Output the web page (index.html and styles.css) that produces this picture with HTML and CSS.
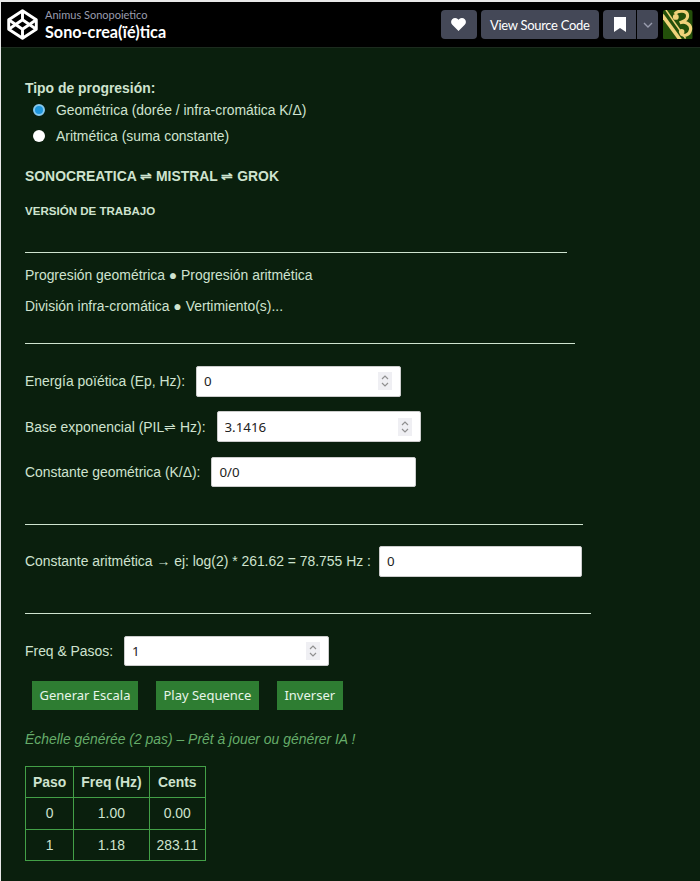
FILE: index.html
```html
<!DOCTYPE html>
<html lang="en">
<head>
    <meta charset="UTF-8">
    <meta name="viewport" content="width=device-width, initial-scale=1.0">
    <title>Sono-crea(ïé)tica</title>
    <link rel="stylesheet" href="styles.css">
</head>
<body>

<header class="pen-header">
    <svg class="pen-logo" viewBox="0 0 36 36" fill="none" stroke="#fff" stroke-width="3.4" stroke-linejoin="round">
        <path d="M18 2 L34 12.5 V23.5 L18 34 L2 23.5 V12.5 Z"/>
        <path d="M18 2 V12.5 M18 23.5 V34 M2 12.5 L18 23.5 L34 12.5 M2 23.5 L18 12.5 L34 23.5"/>
    </svg>
    <div class="pen-title">
        <div class="pen-author">Animus Sonopoietico</div>
        <div class="pen-name">Sono-crea(ïé)tica</div>
    </div>
    <div class="pen-actions">
        <button class="pen-btn pen-btn-icon">
            <svg width="15" height="13" viewBox="0 0 16 14" fill="#fff"><path d="M8 14 L1.3 7.4 C-0.4 5.6 -0.4 3 1.2 1.3 C2.9 -0.4 5.6 -0.4 7.2 1.2 L8 2 L8.8 1.2 C10.4 -0.4 13.1 -0.4 14.8 1.3 C16.4 3 16.4 5.6 14.7 7.4 Z"/></svg>
        </button>
        <button class="pen-btn pen-btn-source">View Source Code</button>
        <div class="pen-split">
            <button class="pen-btn pen-btn-save">
                <svg width="12" height="15" viewBox="0 0 12 15" fill="#fff"><path d="M0 0 H12 V15 L6 11 L0 15 Z"/></svg>
            </button>
            <button class="pen-btn pen-btn-more">
                <svg width="10" height="6" viewBox="0 0 10 6" fill="none" stroke="#9a9dae" stroke-width="1.4"><path d="M1 1 L5 5 L9 1"/></svg>
            </button>
        </div>
        <svg class="pen-avatar" viewBox="0 0 30 30">
            <rect width="30" height="30" rx="2" fill="#234f0a"/>
            <g fill="none" stroke="#f0d27a">
                <path d="M-1 5 L18 31" stroke-width="3.6"/>
                <path d="M3 0 L23 29" stroke-width="1.5"/>
                <path d="M12 4 C15 0 25 0 25 6 C25 11 19 12 17 13 C22 11 29 14 28 20 C27 26 21 27 18 24" stroke-width="3.2"/>
            </g>
            <circle cx="13" cy="7" r="3" fill="#f0d27a"/>
            <circle cx="19" cy="22" r="2.8" fill="#f0d27a"/>
        </svg>
    </div>
</header>

<main class="app">
    <div class="mode-box">
        <div class="mode-title">Tipo de progresión:</div>
        <label class="radio-row"><input type="radio" name="modo" checked> Geométrica (dorée / infra-cromática K/Δ)</label>
        <label class="radio-row"><input type="radio" name="modo"> Aritmética (suma constante)</label>
    </div>

    <h2 class="main-title">SONOCREATICA ⇌ MISTRAL ⇌ GROK</h2>
    <h5 class="sub-title">VERSIÓN DE TRABAJO</h5>

    <hr class="rule rule-1">
    <p class="line">Progresión geométrica ● Progresión aritmética</p>
    <p class="line">División infra-cromática ● Vertimiento(s)...</p>
    <hr class="rule rule-2">

    <div class="field"><label>Energía poïética (Ep, Hz):</label><input type="number" value="0"></div>
    <div class="field"><label>Base exponencial (PIL⇌ Hz):</label><input type="number" value="3.1416"></div>
    <div class="field"><label>Constante geométrica (K/Δ):</label><input type="text" value="0/0"></div>

    <hr class="rule rule-3">
    <div class="field field-tight"><label>Constante aritmética → ej: log(2) * 261.62 = 78.755 Hz :</label><input type="text" value="0"></div>
    <hr class="rule rule-4">

    <div class="field"><label>Freq &amp; Pasos:</label><input type="number" value="1"></div>

    <div class="buttons">
        <button class="action">Generar Escala</button>
        <button class="action">Play Sequence</button>
        <button class="action">Inverser</button>
    </div>

    <p class="status">Échelle générée (2 pas) – Prêt à jouer ou générer IA !</p>

    <table class="scale">
        <tr><th>Paso</th><th>Freq (Hz)</th><th>Cents</th></tr>
        <tr><td>0</td><td>1.00</td><td>0.00</td></tr>
        <tr><td>1</td><td>1.18</td><td>283.11</td></tr>
    </table>
</main>

</body>
</html>
```
FILE: styles.css
```css
* {
    box-sizing: border-box;
}

html {
    background-color: #0a1f0d;
}

body {
    margin: 0;
    border-top: 2px solid #e8e8e8;
    border-left: 1px solid #e8e8e8;
    background-color: #0a1f0d;
    color: #cfe3cf;
    font-family: "Liberation Sans", Arial, sans-serif;
    font-size: 13.92px;
    min-height: 881px;
}

.pen-header {
    display: flex;
    align-items: center;
    height: 46px;
    background-color: #000;
    border-bottom: 1px solid #1c2b1e;
    padding: 0 7.5px 0 6px;
}

.pen-logo {
    width: 31px;
    height: 31px;
    margin-right: 7px;
}

.pen-title {
    flex: 1;
    font-family: Lato, sans-serif;
}

.pen-author {
    color: #9a9dae;
    font-size: 11px;
    line-height: 14px;
}

.pen-name {
    color: #fff;
    font-size: 16.2px;
    font-weight: 700;
    line-height: 20px;
}

.pen-actions {
    display: flex;
    align-items: center;
    gap: 4px;
}

.pen-btn {
    height: 29px;
    border: none;
    border-radius: 4px;
    background-color: #444857;
    color: #fff;
    font-family: Lato, sans-serif;
    font-size: 13px;
    letter-spacing: -0.3px;
    display: flex;
    align-items: center;
    justify-content: center;
    padding: 0;
}

.pen-btn-icon {
    width: 35.5px;
}

.pen-btn-source {
    width: 118.5px;
}

.pen-split {
    display: flex;
    gap: 1px;
}

.pen-btn-save {
    width: 33px;
    border-radius: 4px 0 0 4px;
}

.pen-btn-more {
    width: 21px;
    border-radius: 0 4px 4px 0;
}

.pen-avatar {
    width: 29.5px;
    height: 29.5px;
    margin-left: 1px;
}

.app {
    padding: 32px 24px 0;
}

.mode-box {
    margin-bottom: 19px;
}

.mode-title {
    font-weight: bold;
    line-height: 17px;
}

.radio-row {
    display: flex;
    align-items: center;
    height: 26px;
    padding-left: 8px;
}

.radio-row input {
    appearance: none;
    margin: 0 11px 0 0;
    width: 12px;
    height: 12px;
    border-radius: 50%;
    background-color: #fff;
}

.radio-row input:checked {
    background-color: #1e96dc;
    border: 2px solid #86c8ee;
}

.main-title {
    font-size: 13.92px;
    margin: 0;
    line-height: 17px;
}

.sub-title {
    font-size: 11.55px;
    margin: 19px 0 0;
    line-height: 14px;
}

.rule {
    border: none;
    border-top: 1px solid #cfe3cf;
    margin: 0;
    height: 0;
}

.rule-1 {
    width: 542px;
    margin-top: 34px;
}

.rule-2 {
    width: 550px;
    margin-top: 28px;
    margin-bottom: 22px;
}

.rule-3 {
    width: 558px;
    margin-top: 36.6px;
    margin-bottom: 21px;
}

.rule-4 {
    width: 566px;
    margin-top: 36px;
    margin-bottom: 22px;
}

.line {
    margin: 14px 0 0;
    line-height: 17px;
}

.field {
    display: flex;
    align-items: center;
    gap: 11px;
    margin-bottom: 14.8px;
}

.field input {
    width: 204.6px;
    height: 30.6px;
    border: 1px solid #ccc;
    border-radius: 2px;
    background-color: #fff;
    color: #222;
    font-family: "Noto Sans", sans-serif;
    font-size: 13.3px;
    padding: 0 7px;
}

.field-tight {
    gap: 8px;
}

.field-tight input {
    width: 203.4px;
}

.field input::-webkit-inner-spin-button {
    -webkit-appearance: none;
    width: 14px;
    height: 18px;
    margin-right: 1px;
    background: #efeff3 url("data:image/svg+xml,%3Csvg xmlns='http://www.w3.org/2000/svg' width='14' height='18' fill='none' stroke='%23909090' stroke-width='1.2'%3E%3Cpath d='M4 7 L7 4 L10 7 M4 11 L7 14 L10 11'/%3E%3C/svg%3E") no-repeat center;
    opacity: 1;
}

.buttons {
    display: flex;
    gap: 18px;
    padding-left: 7px;
}

.action {
    height: 29px;
    border: none;
    background-color: #2e7d32;
    color: #e8f5e9;
    font-family: "Noto Sans", sans-serif;
    font-size: 13px;
    padding: 0 7.5px;
}

.status {
    margin: 21px 0 18px;
    color: #66ad6a;
    font-style: italic;
    line-height: 17px;
}

.scale {
    border-collapse: collapse;
    text-align: center;
}

.scale th, .scale td {
    border: 1px solid #43a047;
    padding: 7px;
    line-height: 16.4px;
}
```
